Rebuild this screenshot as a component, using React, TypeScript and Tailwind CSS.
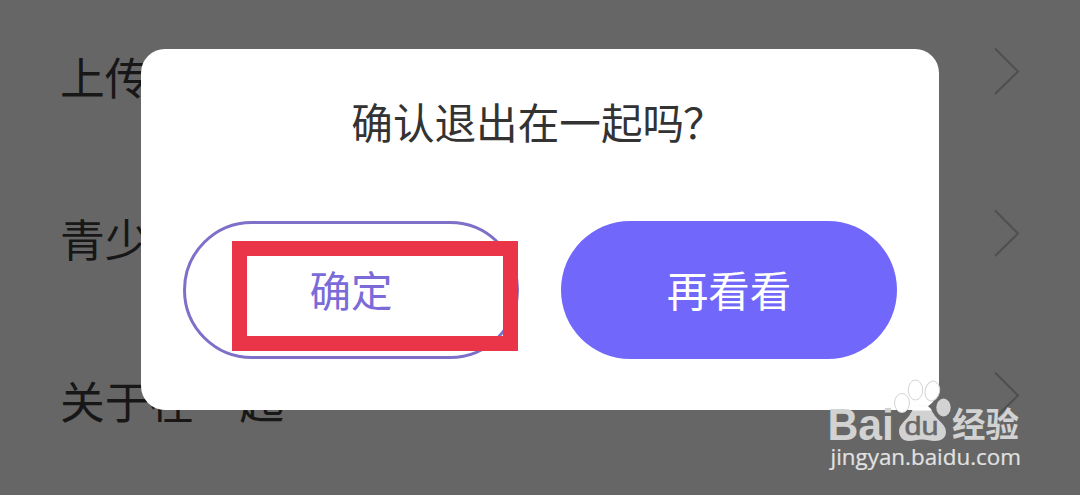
const settings = ['上传日志', '青少年模式', '关于在一起'];

function Chevron() {
  return (
    <svg width="26" height="48" viewBox="0 0 26 48" fill="none" stroke="#4f4f4f" strokeWidth="2">
      <path d="M1 1.5L24 24.5L1 47" />
    </svg>
  );
}

function Watermark() {
  return (
    <svg
      className="absolute left-[820px] top-[372px]"
      width="210"
      height="110"
      viewBox="820 372 210 110"
      fill="#d2d2d2"
    >
      <text x="827.5" y="439.5" fontFamily="Liberation Sans, sans-serif" fontWeight="700" fontSize="44" textLength="66.5" lengthAdjust="spacingAndGlyphs">
        Bai
      </text>
      <g stroke="#d4d4d4" strokeWidth="1" fill="#fff">
        <ellipse cx="902" cy="403" rx="7.5" ry="9.5" />
        <ellipse cx="915.5" cy="390" rx="7.2" ry="10" />
        <ellipse cx="932.3" cy="391" rx="7.2" ry="10" transform="rotate(12 932.3 391)" />
      </g>
      <ellipse cx="943.5" cy="407.5" rx="7.2" ry="9" />
      <path d="M922 405C929 405 932 411 935 416C939 421 946 425 946 432C946 438 941 441 935 441C930 441 927 439.5 922 439.5C917 439.5 914 441 909 441C903 441 899 437 899 431C899 425 905 421 909 416C912 411 915 405 922 405Z" />
      <path d="M922 405C928 405 930.5 408 932 410.5H912C914 408 916 405 922 405Z" fill="#fff" />
      <text x="904.5" y="435" fontFamily="Liberation Sans, sans-serif" fontWeight="400" fontSize="26" fill="#686868" stroke="#686868" strokeWidth="0.5" textLength="34" lengthAdjust="spacingAndGlyphs">
        du
      </text>
      <text x="952" y="437" fontFamily="Noto Sans CJK SC, sans-serif" fontWeight="700" fontSize="34" textLength="67" lengthAdjust="spacingAndGlyphs">
        经验
      </text>
      <text x="830.5" y="465" fontFamily="Open Sans, sans-serif" fontSize="22" fill="#e2e2e2" stroke="#e2e2e2" strokeWidth="0.2" textLength="190.5" lengthAdjust="spacingAndGlyphs">
        jingyan.baidu.com
      </text>
    </svg>
  );
}

export default function App() {
  return (
    <main className="relative h-[495px] w-[1080px] overflow-hidden bg-[#666666] font-['Noto_Sans_CJK_SC',sans-serif]">
      <ul className="flex flex-col pr-[60px] pl-[60px]">
        {settings.map((label) => (
          <li key={label} className="flex h-[162px] items-start justify-between pt-[47px]">
            <span className="-mt-px text-[44.8px] leading-[60px] text-[#171717]">{label}</span>
            <Chevron />
          </li>
        ))}
      </ul>

      <div className="absolute inset-0 flex items-start justify-center pt-[49px]">
        <section role="dialog" className="flex h-[361px] w-[798px] flex-col rounded-[24px] bg-white px-[42px] pt-[42px]">
          <h1 className="pr-[3px] text-center text-[41.6px] leading-[60px] text-[#333333]">
            确认退出在一起吗<span className="-ml-px mr-px">？</span>
          </h1>
          <div className="mt-[70px] flex gap-[42px]">
            <button className="relative h-[138px] w-[336px] shrink-0 rounded-full border-[3px] border-[#7d70c9] pb-[2px] text-[41.5px] text-[#7b6bd9]">
              确定
              <span className="absolute top-[17px] left-[46px] h-[110px] w-[286px] border-[15px] border-[#e93547]" />
            </button>
            <button className="h-[138px] w-[336px] shrink-0 rounded-full bg-[#7167fa] pb-[2px] text-[41.5px] text-white">
              再看看
            </button>
          </div>
        </section>
      </div>

      <Watermark />
    </main>
  );
}
